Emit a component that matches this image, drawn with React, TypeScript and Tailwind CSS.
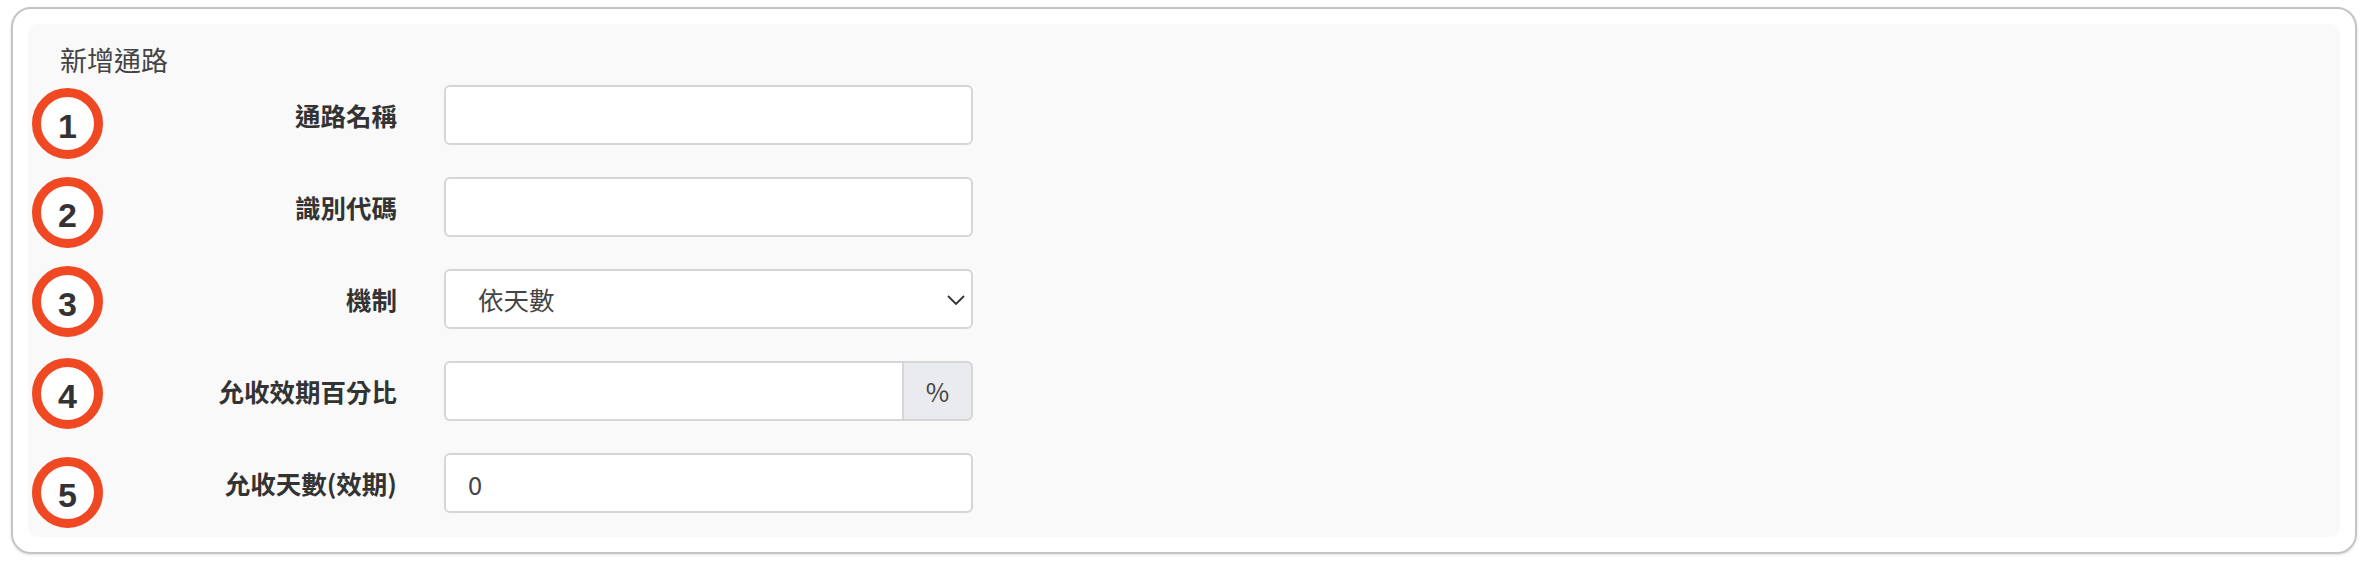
import { useState } from "react";

const markers = [
  { n: 1, pos: "top-[64px]" },
  { n: 2, pos: "top-[153px]" },
  { n: 3, pos: "top-[242px]" },
  { n: 4, pos: "top-[334px]" },
  { n: 5, pos: "top-[433px]" },
];

const Marker = ({ n, pos }: { n: number; pos: string }) => (
  <div
    className={`absolute left-[4px] ${pos} w-[71px] h-[71px] rounded-full border-[9px] border-[#ef4823] bg-white flex items-center justify-center text-[34px] leading-none pt-[4px] font-bold text-[#333] font-['Liberation_Sans',Arial,sans-serif]`}
  >
    {n}
  </div>
);

const Row = ({ label, children }: { label: string; children: React.ReactNode }) => (
  <div className="flex items-center h-[60px] gap-[47px]">
    <label className="w-[369px] text-right text-[25.5px] font-bold text-[#333] leading-none">
      {label}
    </label>
    <div className="w-[529px] h-full">{children}</div>
  </div>
);

const inputCls =
  "w-full h-full bg-white border-2 border-[#d6d6d6] rounded-[6px] px-[22px] text-[25.5px] text-[#444] outline-none";

export default function App() {
  const [mode, setMode] = useState("days");

  return (
    <div className="bg-white px-[11px] pt-[7px] pb-[16px] font-['Noto_Sans_CJK_TC','Noto_Sans',sans-serif]">
      <div className="rounded-[20px] border-2 border-[#c4c4c4] p-[15px] shadow-[0_1px_3px_rgba(0,0,0,0.12)]">
        <div className="relative rounded-[10px] bg-[#f9f9f9] pt-[18px] pb-[24px]">
          <h2 className="pl-[32px] text-[27px] leading-[36px] text-[#444] font-normal">
            新增通路
          </h2>

          <div className="mt-[7px] flex flex-col gap-[32px]">
            <Row label="通路名稱">
              <input className={inputCls} />
            </Row>
            <Row label="識別代碼">
              <input className={inputCls} />
            </Row>
            <Row label="機制">
              <div className="relative h-full">
                <select
                  value={mode}
                  onChange={(e) => setMode(e.target.value)}
                  className="w-full h-full appearance-none bg-white border-2 border-[#d6d6d6] rounded-[6px] pl-[32px] pr-[40px] text-[25.5px] text-[#444] outline-none"
                >
                  <option value="days">依天數</option>
                  <option value="percent">依百分比</option>
                </select>
                <svg
                  className="absolute right-[8px] top-[26px] pointer-events-none"
                  width="18"
                  height="10"
                  viewBox="0 0 18 10"
                  fill="none"
                >
                  <path d="M1 1l8 8 8-8" stroke="#333" strokeWidth="1.8" />
                </svg>
              </div>
            </Row>
            <Row label="允收效期百分比">
              <div className="flex h-full">
                <input className="flex-1 min-w-0 h-full bg-white border-2 border-r-0 border-[#d6d6d6] rounded-l-[6px] px-[22px] text-[25.5px] text-[#444] outline-none" />
                <span className="w-[71px] h-full flex items-center justify-center bg-[#e9ebee] border-2 border-[#d6d6d6] rounded-r-[6px] text-[25.5px] text-[#444]">
                  %
                </span>
              </div>
            </Row>
            <Row label="允收天數(效期)">
              <input className={inputCls} defaultValue="0" />
            </Row>
          </div>

          {markers.map((m) => (
            <Marker key={m.n} n={m.n} pos={m.pos} />
          ))}
        </div>
      </div>
    </div>
  );
}
